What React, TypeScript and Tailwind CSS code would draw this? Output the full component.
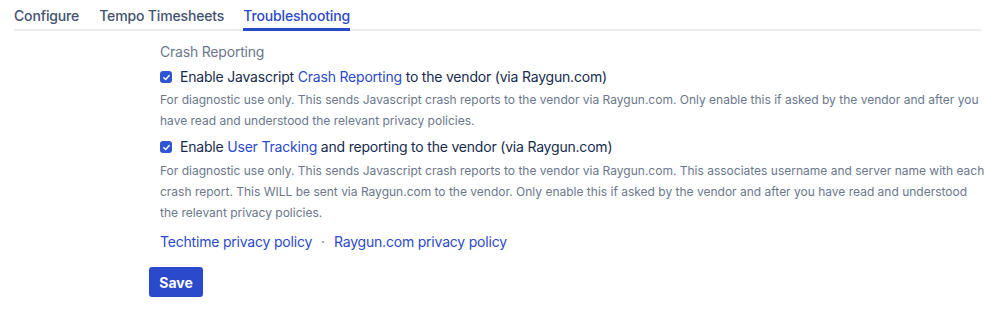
import React from "react";

function Check() {
  return (
    <span className="flex h-3 w-3 shrink-0 items-center justify-center rounded-[3px] bg-[#2f55d4]">
      <svg width="9" height="9" viewBox="0 0 10 10" fill="none">
        <path d="M2 5.2 L4.1 7.2 L8 2.8" stroke="white" strokeWidth="1.6" strokeLinecap="round" strokeLinejoin="round" />
      </svg>
    </span>
  );
}

export default function App() {
  return (
    <div className="min-h-[320px] w-[1000px] bg-white pl-[14px] pr-[19px] text-[#172b4d]" style={{ fontFamily: "Inter, 'Noto Sans', sans-serif" }}>
      <div className="flex h-[31px] gap-5 border-b-2 border-[#ebecf0] text-[14px] font-medium tracking-[-0.15px]">
        <div className="h-[31px] pt-[6px] leading-[20px] text-[#42526e]">Configure</div>
        <div className="h-[31px] pt-[6px] leading-[20px] text-[#42526e]">Tempo Timesheets</div>
        <div className="-ml-[1px] h-[31px] border-b-[3px] border-[#2b4acb] pt-[6px] leading-[20px] text-[#2b4acb]">Troubleshooting</div>
      </div>
      <div className="-mr-[8px] pl-[146px]">
        <div className="mt-[11px] text-[14px] leading-[20px] tracking-[-0.2px] text-[#6b778c]">Crash Reporting</div>
        <div className="mt-[5px] flex items-center gap-2 text-[14px] leading-[20px] tracking-[-0.2px]">
          <Check />
          <span>
            Enable Javascript <span className="text-[#2b4acb]">Crash Reporting</span> to the vendor (via Raygun.com)
          </span>
        </div>
        <p className="mt-[2px] text-[12px] leading-[21px] text-[#6b778c]">
          For diagnostic use only. This sends Javascript crash reports to the vendor via Raygun.com. Only enable this if asked by the vendor and after you
          <br />
          have read and understood the relevant privacy policies.
        </p>
        <div className="mt-[6px] flex items-center gap-2 text-[14px] leading-[20px] tracking-[-0.2px]">
          <Check />
          <span>
            Enable <span className="text-[#2b4acb]">User Tracking</span> and reporting to the vendor (via Raygun.com)
          </span>
        </div>
        <p className="mt-[3px] text-[12px] leading-[21px] text-[#6b778c]">
          For diagnostic use only. This sends Javascript crash reports to the vendor via Raygun.com. This associates username and server name with each
          <br />
          crash report. This WILL be sent via Raygun.com to the vendor. Only enable this if asked by the vendor and after you have read and understood
          <br />
          the relevant privacy policies.
        </p>
        <div className="mt-[9px] flex items-center gap-[9px] text-[14px] leading-[20px] tracking-[-0.2px]">
          <span className="text-[#2b4acb]">Techtime privacy policy</span>
          <span className="text-[#6b778c]">·</span>
          <span className="text-[#2b4acb]">Raygun.com privacy policy</span>
        </div>
        <button className="-ml-[11px] mt-[15px] h-[30px] w-[54px] rounded-[3px] bg-[#2b4acb] text-[14px] font-bold text-white">
          Save
        </button>
      </div>
    </div>
  );
}
